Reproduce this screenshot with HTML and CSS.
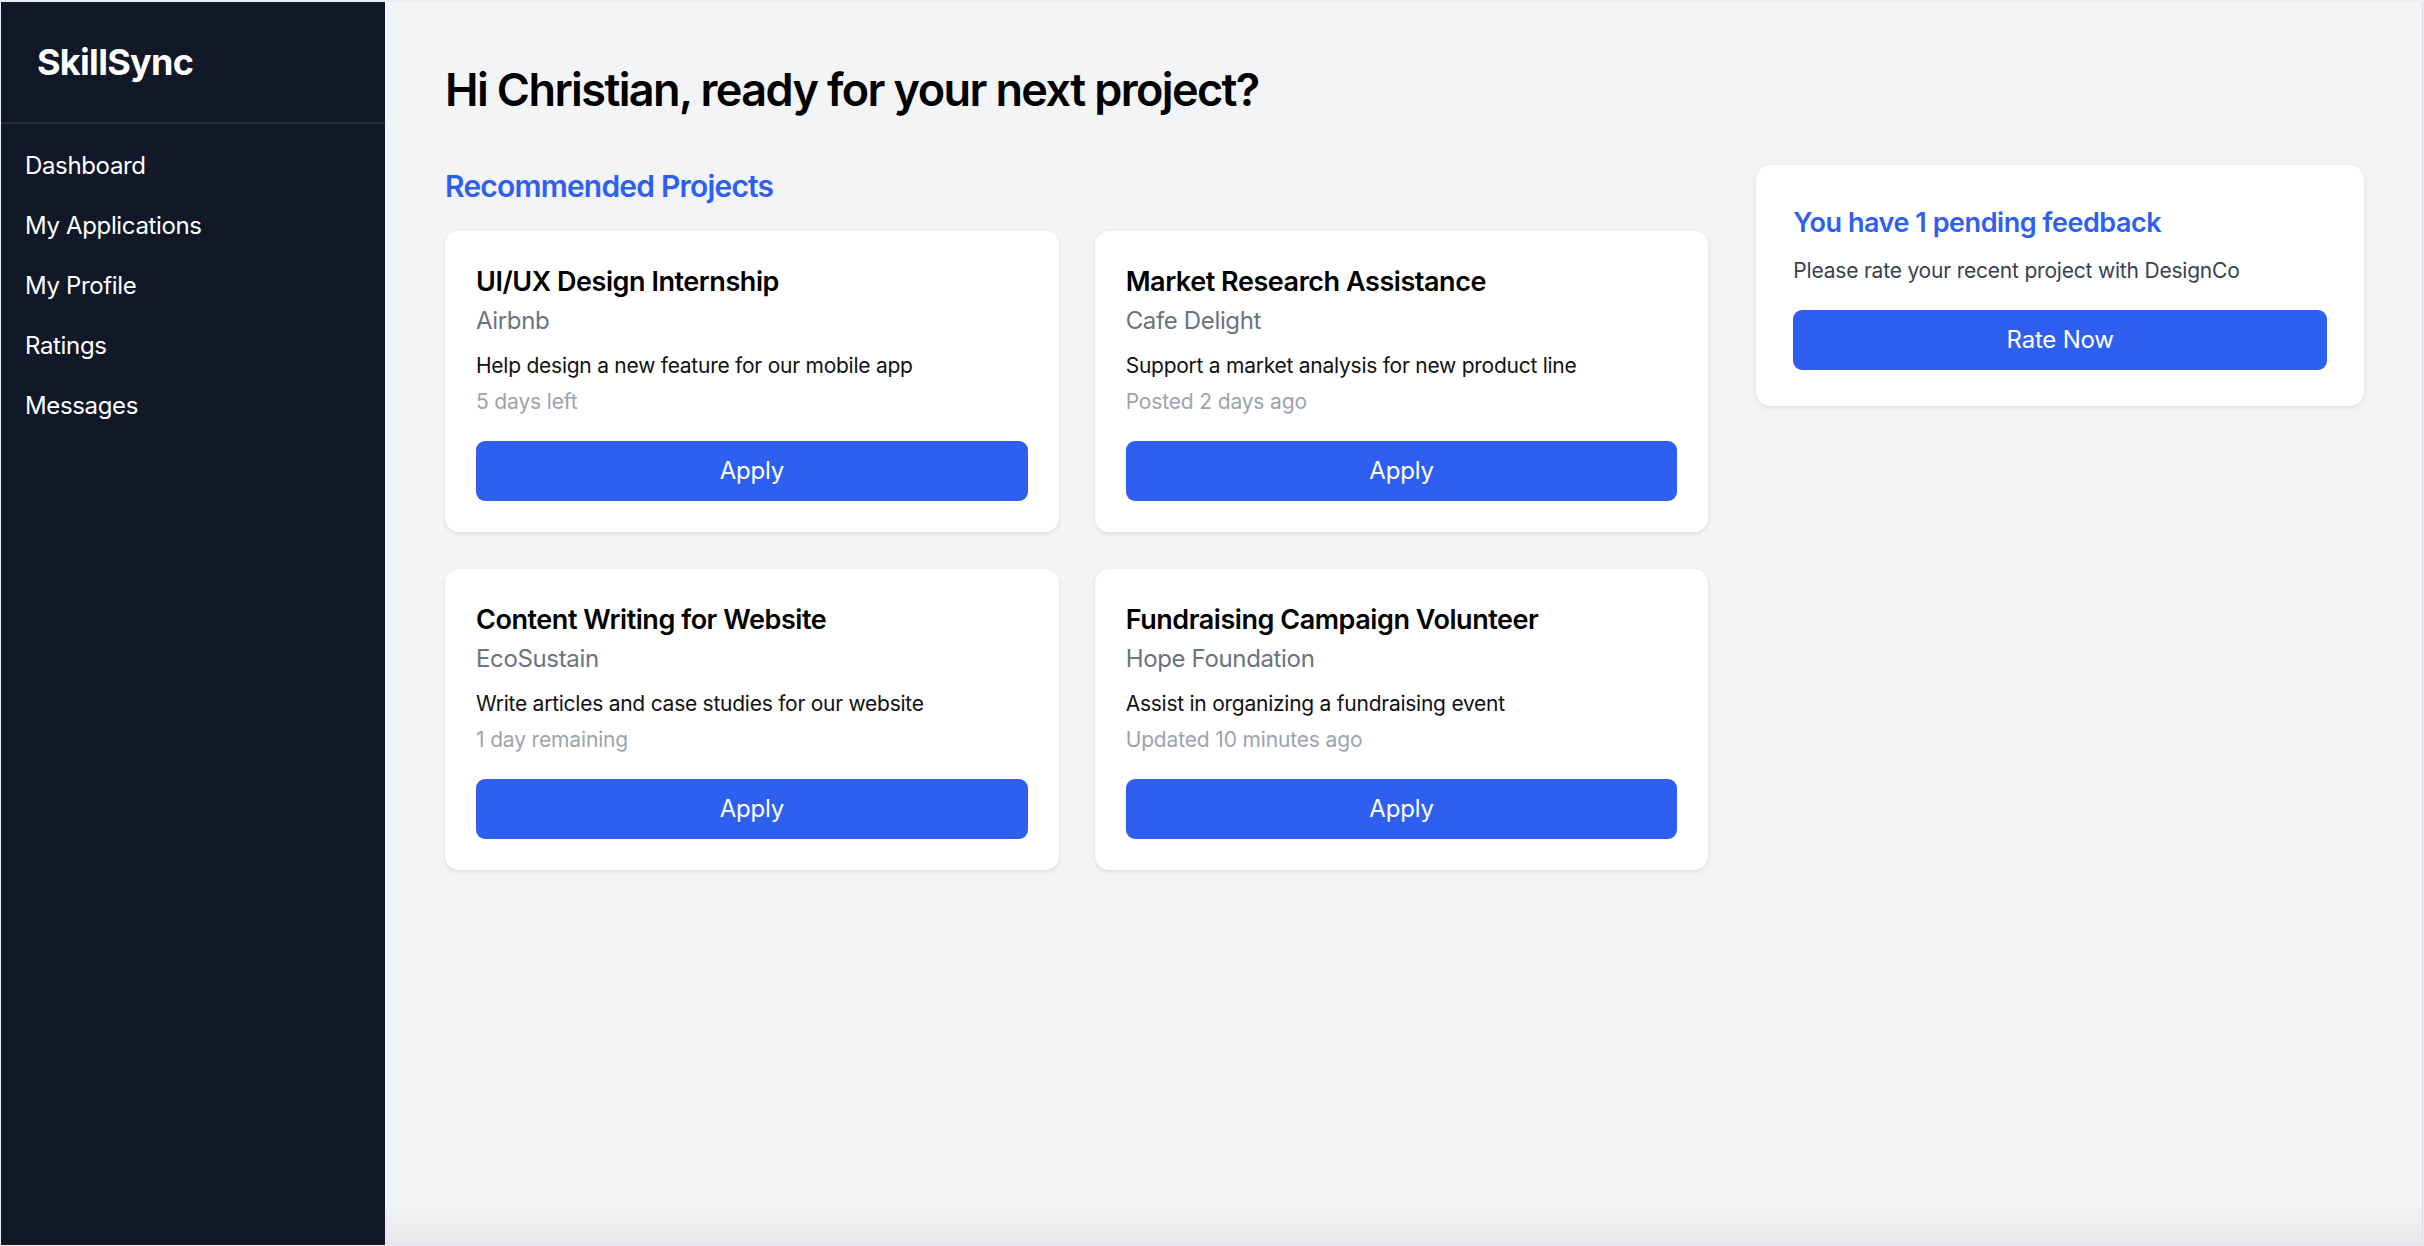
FILE: index.html
```html
<!DOCTYPE html>
<html lang="en">
<head>
<meta charset="utf-8">
<title>SkillSync</title>
<link rel="stylesheet" href="styles.css">
</head>
<body>
<div class="frame">
  <aside class="sidebar">
    <div class="brand">SkillSync</div>
    <nav class="nav">
      <a class="nav-item">Dashboard</a>
      <a class="nav-item">My Applications</a>
      <a class="nav-item">My Profile</a>
      <a class="nav-item">Ratings</a>
      <a class="nav-item">Messages</a>
    </nav>
  </aside>
  <main class="main">
    <h1 class="greeting">Hi Christian, ready for your next project?</h1>
    <div class="layout">
      <section class="projects">
        <h2 class="section-title">Recommended Projects</h2>
        <div class="cards">
          <div class="card">
            <div class="card-title">UI/UX Design Internship</div>
            <div class="card-company">Airbnb</div>
            <div class="card-desc">Help design a new feature for our mobile app</div>
            <div class="card-meta">5 days left</div>
            <button class="btn">Apply</button>
          </div>
          <div class="card">
            <div class="card-title">Market Research Assistance</div>
            <div class="card-company">Cafe Delight</div>
            <div class="card-desc">Support a market analysis for new product line</div>
            <div class="card-meta">Posted 2 days ago</div>
            <button class="btn">Apply</button>
          </div>
          <div class="card">
            <div class="card-title">Content Writing for Website</div>
            <div class="card-company">EcoSustain</div>
            <div class="card-desc">Write articles and case studies for our website</div>
            <div class="card-meta">1 day remaining</div>
            <button class="btn">Apply</button>
          </div>
          <div class="card">
            <div class="card-title">Fundraising Campaign Volunteer</div>
            <div class="card-company">Hope Foundation</div>
            <div class="card-desc">Assist in organizing a fundraising event</div>
            <div class="card-meta">Updated 10 minutes ago</div>
            <button class="btn">Apply</button>
          </div>
        </div>
      </section>
      <aside class="side">
        <div class="panel">
          <div class="panel-title">You have 1 pending feedback</div>
          <div class="panel-desc">Please rate your recent project with DesignCo</div>
          <button class="btn">Rate Now</button>
        </div>
      </aside>
    </div>
  </main>
</div>
</body>
</html>
```

FILE: styles.css
```css
* { box-sizing: border-box; }
html, body {
  margin: 0;
  padding: 0;
  height: 100%;
}
body {
  font-family: Inter, "Noto Sans", "Liberation Sans", sans-serif;
  color: #000;
  padding: 2px 1px 1px 1px;
  background: #eceef1;
}
.frame {
  display: flex;
  height: 100%;
  min-height: 1243px;
}
.sidebar {
  width: 384px;
  flex-shrink: 0;
  background: #111827;
  color: #fff;
}
.brand {
  padding: 36px 36px;
  font-size: 36px;
  line-height: 48px;
  font-weight: 700;
  border-bottom: 2px solid #1f2937;
  letter-spacing: -0.7px;
}
.nav {
  display: flex;
  flex-direction: column;
  padding: 12px 0;
}
.nav-item {
  display: block;
  padding: 18px 24px;
  font-size: 24px;
  line-height: 24px;
  letter-spacing: -0.35px;
  color: #fff;
}
.main {
  flex: 1;
  padding: 61px 58px 60px 60px;
  background: linear-gradient(to bottom, #f3f4f6 0, #f3f4f6 calc(100% - 45px), #e8e8ea 100%);
  border-right: 1px solid #dcdcde;
}
.greeting {
  margin: 0 0 48px 0;
  font-size: 45px;
  line-height: 54px;
  font-weight: 600;
  letter-spacing: -1.6px;
  color: #000;
}
.layout {
  display: grid;
  grid-template-columns: repeat(3, minmax(0, 1fr));
  column-gap: 48px;
  align-items: start;
}
.projects {
  grid-column: span 2;
  min-width: 0;
}
.section-title {
  margin: 0 0 24px 0;
  font-size: 30px;
  line-height: 42px;
  font-weight: 600;
  color: #2f5ff1;
  letter-spacing: -0.8px;
}
.cards {
  display: grid;
  grid-template-columns: repeat(2, minmax(0, 1fr));
  column-gap: 36px;
  row-gap: 37px;
}
.card, .panel {
  background: #fff;
  border-radius: 14px;
  box-shadow: 0 2px 5px rgba(0, 0, 0, 0.09), 0 0 1px rgba(0, 0, 0, 0.06);
}
.card {
  padding: 30px 31px 31px;
}
.card-title {
  font-size: 27px;
  line-height: 42px;
  font-weight: 600;
  letter-spacing: -0.45px;
  color: #000;
}
.card-company {
  font-size: 24px;
  line-height: 36px;
  letter-spacing: -0.35px;
  color: #6b7280;
}
.card-desc {
  margin-top: 12px;
  font-size: 21px;
  line-height: 30px;
  letter-spacing: -0.25px;
  color: #111;
}
.card-meta {
  margin-top: 6px;
  font-size: 21px;
  line-height: 30px;
  letter-spacing: -0.15px;
  color: #9ca3af;
}
.btn {
  display: block;
  width: 100%;
  margin-top: 24px;
  height: 60px;
  border: none;
  border-radius: 9px;
  background: #2f5ff1;
  color: #fff;
  font-family: inherit;
  font-size: 24px;
  line-height: 24px;
  font-weight: 400;
  letter-spacing: -0.2px;
  cursor: pointer;
}
.panel {
  padding: 37px 37px 36px;
}
.panel-title {
  font-size: 27px;
  line-height: 42px;
  font-weight: 600;
  letter-spacing: -0.45px;
  color: #2f5ff1;
}
.panel-desc {
  margin-top: 12px;
  font-size: 21px;
  line-height: 30px;
  letter-spacing: -0.2px;
  color: #374151;
}
```
